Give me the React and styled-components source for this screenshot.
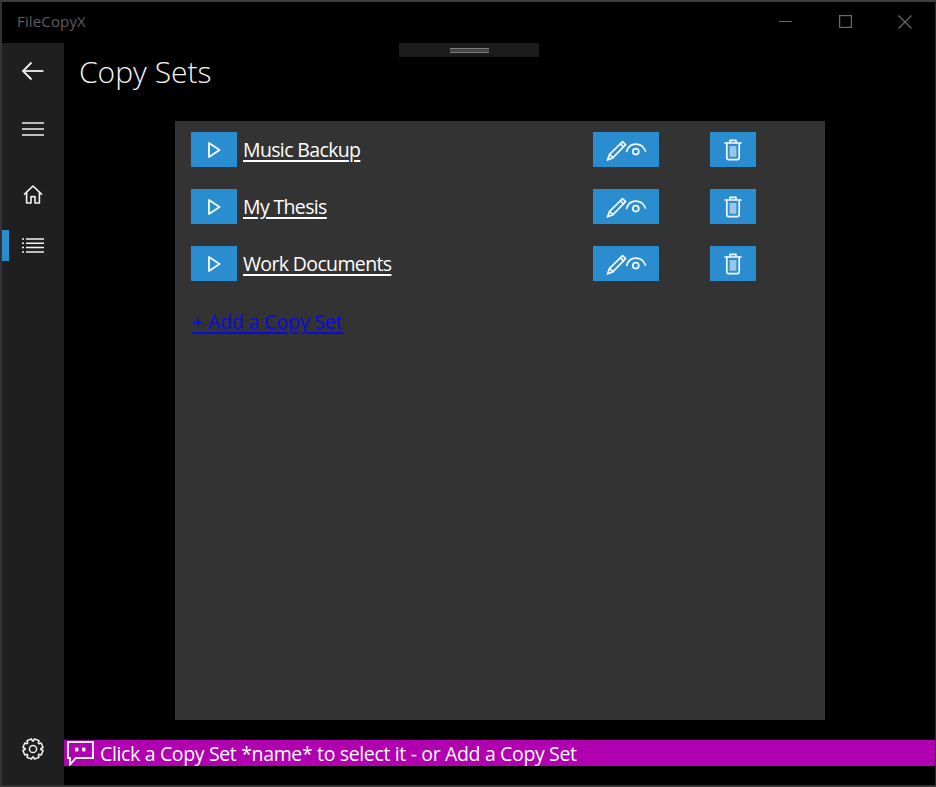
import React from "react";
import styled, { createGlobalStyle } from "styled-components";

const Global = createGlobalStyle`
  html, body { margin: 0; padding: 0; background: #000; }
  body { font-family: "Open Sans", "Noto Sans", sans-serif; }
`;

const Win = styled.div`
  position: relative;
  box-sizing: border-box;
  width: 936px;
  height: 787px;
  background: #000;
  border-top: 2px solid #3f3f3f;
  border-left: 2px solid #333;
  border-right: 1px solid #2a2a2a;
  border-bottom: 2px solid #333;
  display: flex;
  flex-direction: column;
  overflow: hidden;
`;

const TitleBar = styled.div`
  height: 41px;
  flex: none;
  display: flex;
  align-items: center;
  justify-content: space-between;
`;

const AppName = styled.div`
  margin-left: 15px;
  margin-top: -4px;
  font-size: 15px;
  letter-spacing: 0.15px;
  color: #5e5e5e;
`;

const WinButtons = styled.div`
  display: flex;
  margin-top: -2px;
`;

const WinBtn = styled.div`
  width: 60px;
  height: 32px;
  display: flex;
  align-items: center;
  justify-content: center;
  color: #6b6b6b;
`;

const Handle = styled.div`
  position: absolute;
  top: 41px;
  left: 397px;
  width: 140px;
  height: 14px;
  background: #1c1c1c;
  display: flex;
  align-items: center;
  justify-content: center;
`;

const Grip = styled.div`
  width: 39px;
  height: 3px;
  border-top: 1px solid #7a7a7a;
  border-bottom: 1px solid #7a7a7a;
  background: #444;
`;

const Body = styled.div`
  flex: 1;
  display: flex;
  min-height: 0;
`;

const Sidebar = styled.nav`
  width: 62px;
  flex: none;
  background: #1f1f1f;
  display: flex;
  flex-direction: column;
  color: #f2f2f2;
`;

const NavItem = styled.div`
  position: relative;
  height: ${(p) => p.$h}px;
  flex: none;
  display: flex;
  align-items: center;
  justify-content: center;
`;

const Marker = styled.span`
  position: absolute;
  left: 0;
  top: 1px;
  width: 7px;
  height: 31px;
  background: #2a8dd0;
`;

const Spacer = styled.div`
  flex: 1;
`;

const Main = styled.main`
  flex: 1;
  min-width: 0;
  display: flex;
  flex-direction: column;
`;

const Title = styled.h1`
  margin: 0;
  height: 78px;
  flex: none;
  padding-left: 15px;
  font-size: 30px;
  font-weight: 300;
  line-height: 58px;
  letter-spacing: 0;
  color: #f4f4f4;
`;

const Panel = styled.section`
  box-sizing: border-box;
  width: 650px;
  height: 599px;
  flex: none;
  margin-left: 111px;
  padding: 11px 16px;
  background: #333;
  display: flex;
  flex-direction: column;
  gap: 22px;
`;

const Row = styled.div`
  height: 35px;
  display: grid;
  grid-template-columns: 46px 356px 66px 51px 46px;
  align-items: center;
`;

const BlueBtn = styled.button`
  width: ${(p) => p.$w}px;
  height: 35px;
  padding: 0;
  border: 0;
  background: #2a8dd0;
  color: #f4f8fb;
  display: flex;
  align-items: center;
  justify-content: center;
`;

const NameLink = styled.a`
  margin-left: 6px;
  font-size: 19.5px;
  letter-spacing: -0.64px;
  color: #fff;
  text-decoration: underline;
  text-underline-offset: 3px;
  text-decoration-thickness: 1.5px;
`;

const AddLink = styled.a`
  margin-left: 1px;
  margin-top: 4px;
  font-size: 19.5px;
  line-height: 30px;
  letter-spacing: -0.13px;
  color: #0a0ae0;
  text-decoration: underline;
  text-underline-offset: 3px;
  text-decoration-thickness: 1.5px;
`;

const Status = styled.div`
  height: 26px;
  flex: none;
  margin-top: 20px;
  background: #b000b0;
  color: #fff;
  display: flex;
  align-items: center;
  gap: 6px;
  font-size: 19.5px;
  letter-spacing: -0.35px;
  white-space: nowrap;
`;

const StatusIcon = styled.svg`
  margin-left: 3px;
  flex: none;
`;

const Play = () => (
  <svg width="14" height="18" viewBox="0 0 14 18" fill="none" stroke="currentColor" strokeWidth="1.9">
    <path d="M2 2 L12.5 9 L2 16 Z" strokeLinejoin="round" />
  </svg>
);

const EditView = () => (
  <svg width="42" height="24" viewBox="0 0 42 24" fill="none" stroke="currentColor" strokeWidth="1.7" strokeLinejoin="round" strokeLinecap="round">
    <path d="M17.6 3.6 L20.6 6.6 L8 19.6 L2.4 22 L4.6 16.4 Z" />
    <path d="M15.4 5.8 L18.4 8.8" />
    <path d="M4.6 16.4 L8 19.6" />
    <path d="M21.6 13.5 C24.5 4 36.5 3.6 40.4 13" />
    <circle cx="30.8" cy="13.6" r="3" />
  </svg>
);

const Trash = () => (
  <svg width="18" height="22" viewBox="0 0 18 22" fill="none" stroke="currentColor" strokeWidth="1.7" strokeLinejoin="round" strokeLinecap="round">
    <path d="M1 4 H17" />
    <path d="M6 3.6 V1.4 H12 V3.6" />
    <path d="M2.8 4 V18.6 A2 2 0 0 0 4.8 20.6 H13.2 A2 2 0 0 0 15.2 18.6 V4" />
    <rect x="5.6" y="7" width="6.8" height="10.8" fill="currentColor" fillOpacity="0.55" stroke="none" />
  </svg>
);

const Back = () => (
  <svg width="24" height="20" viewBox="0 0 24 20" fill="none" stroke="currentColor" strokeWidth="1.8">
    <path d="M22.5 10 H2" />
    <path d="M10.5 1.5 L2 10 L10.5 18.5" />
  </svg>
);

const Burger = () => (
  <svg width="22" height="14" viewBox="0 0 22 14" stroke="currentColor" strokeWidth="1.5">
    <path d="M0 1 H22 M0 7 H22 M0 13 H22" />
  </svg>
);

const Home = () => (
  <svg width="20" height="19" viewBox="0 0 20 19" fill="none" stroke="currentColor" strokeWidth="1.6" strokeLinejoin="round">
    <path d="M1 9.6 L10 1 L19 9.6" />
    <path d="M3.6 7.6 V18 H8 V11.6 H12 V18 H16.4 V7.6" />
  </svg>
);

const ListIcon = () => (
  <svg width="22" height="15" viewBox="0 0 22 15" stroke="currentColor" strokeWidth="1.5">
    <path d="M4 1 H22 M4 5.3 H22 M4 9.6 H22 M4 13.9 H22" />
    <path d="M0 1 H2 M0 5.3 H2 M0 9.6 H2 M0 13.9 H2" />
  </svg>
);

const gearPath = (() => {
  const teeth = 8;
  const pts = [];
  for (let i = 0; i < teeth; i += 1) {
    const a = (i / teeth) * Math.PI * 2 + Math.PI / 8;
    const w = Math.PI / 13;
    const g = Math.PI / 8;
    [
      [7.9, a - g + 0.06],
      [10.2, a - w],
      [10.2, a + w],
      [7.9, a + g - 0.06],
    ].forEach(([r, t]) => {
      pts.push(`${(11 + r * Math.cos(t)).toFixed(2)} ${(11 + r * Math.sin(t)).toFixed(2)}`);
    });
  }
  return `M${pts.join(" L")} Z`;
})();

const Gear = () => (
  <svg width="22" height="22" viewBox="0 0 22 22" fill="none" stroke="currentColor" strokeWidth="1.5" strokeLinejoin="round">
    <path d={gearPath} />
    <circle cx="11" cy="11" r="3.6" />
  </svg>
);

const Chat = () => (
  <StatusIcon width="27" height="25" viewBox="0 0 27 25" fill="none" stroke="currentColor" strokeWidth="1.8" strokeLinejoin="miter">
    <path d="M1 1 H26 V17 H9 L3 23.5 V17 H1 Z" />
    <rect x="8.2" y="6.6" width="3.2" height="3.8" fill="currentColor" stroke="none" />
    <rect x="15.2" y="6.6" width="3.2" height="3.8" fill="currentColor" stroke="none" />
  </StatusIcon>
);

const sets = ["Music Backup", "My Thesis", "Work Documents"];

export default function App() {
  return (
    <>
      <Global />
      <Win>
        <TitleBar>
          <AppName>FileCopyX</AppName>
          <WinButtons>
            <WinBtn>
              <svg width="13" height="13" viewBox="0 0 13 13" stroke="currentColor" strokeWidth="1">
                <path d="M0 6.5 H13" />
              </svg>
            </WinBtn>
            <WinBtn>
              <svg width="13" height="13" viewBox="0 0 13 13" fill="none" stroke="currentColor" strokeWidth="1.2">
                <rect x="0.6" y="0.6" width="11.8" height="11.8" />
              </svg>
            </WinBtn>
            <WinBtn>
              <svg width="14" height="14" viewBox="0 0 14 14" stroke="currentColor" strokeWidth="1.1">
                <path d="M0.5 0.5 L13.5 13.5 M13.5 0.5 L0.5 13.5" />
              </svg>
            </WinBtn>
          </WinButtons>
        </TitleBar>
        <Handle>
          <Grip />
        </Handle>
        <Body>
          <Sidebar>
            <NavItem $h={56}>
              <Back />
            </NavItem>
            <NavItem $h={60}>
              <Burger />
            </NavItem>
            <NavItem $h={70}>
              <Home />
            </NavItem>
            <NavItem $h={32}>
              <Marker />
              <ListIcon />
            </NavItem>
            <Spacer />
            <NavItem $h={72}>
              <Gear />
            </NavItem>
          </Sidebar>
          <Main>
            <Title>Copy Sets</Title>
            <Panel>
              {sets.map((name) => (
                <Row key={name}>
                  <BlueBtn $w={46}>
                    <Play />
                  </BlueBtn>
                  <NameLink>{name}</NameLink>
                  <BlueBtn $w={66}>
                    <EditView />
                  </BlueBtn>
                  <span />
                  <BlueBtn $w={46}>
                    <Trash />
                  </BlueBtn>
                </Row>
              ))}
              <AddLink>+ Add a Copy Set</AddLink>
            </Panel>
            <Status>
              <Chat />
              Click a Copy Set *name* to select it - or Add a Copy Set
            </Status>
          </Main>
        </Body>
      </Win>
    </>
  );
}
